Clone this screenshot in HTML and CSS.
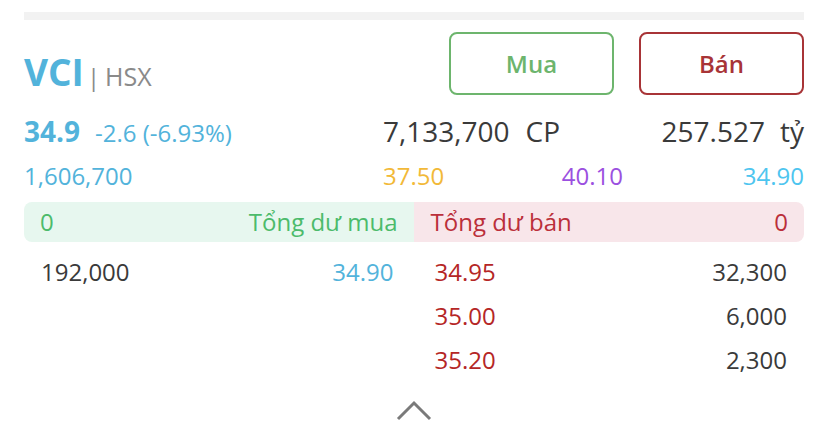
FILE: index.html
```html
<!DOCTYPE html>
<html lang="vi">
<head>
<meta charset="utf-8">
<link rel="stylesheet" href="styles.css">
</head>
<body>
<div class="page">
  <div class="topbar"></div>
  <div class="header">
    <div class="title"><span class="sym">VCI</span><span class="pipe">|</span><span class="exch">HSX</span></div>
    <div class="actions">
      <button class="btn buy">Mua</button>
      <button class="btn sell">Bán</button>
    </div>
  </div>
  <div class="row2">
    <div class="cell price"><span class="last">34.9</span><span class="chg">-2.6 (-6.93%)</span></div>
    <div class="cell vol"><span>7,133,700</span><span class="unit">CP</span></div>
    <div class="cell val"><span>257.527</span><span class="unit2">tỷ</span></div>
  </div>
  <div class="row3">
    <div class="c-blue">1,606,700</div>
    <div class="mid"><span class="c-yellow">37.50</span><span class="c-purple">40.10</span></div>
    <div class="c-cyan right">34.90</div>
  </div>
  <div class="summary">
    <div class="sum buy-sum"><span>0</span><span>Tổng dư mua</span></div>
    <div class="sum sell-sum"><span>Tổng dư bán</span><span>0</span></div>
  </div>
  <div class="book">
    <div class="side bids">
      <div class="orow"><span class="qty">192,000</span><span class="bidp">34.90</span></div>
    </div>
    <div class="side asks">
      <div class="orow"><span class="askp">34.95</span><span class="qty">32,300</span></div>
      <div class="orow"><span class="askp">35.00</span><span class="qty">6,000</span></div>
      <div class="orow"><span class="askp">35.20</span><span class="qty">2,300</span></div>
    </div>
  </div>
  <div class="more">
    <svg width="36" height="22" viewBox="0 0 36 22"><polyline points="2,19 18,3 34,19" fill="none" stroke="#7a7a7a" stroke-width="3"/></svg>
  </div>
</div>
</body>
</html>
```
FILE: styles.css
```css
* { box-sizing: border-box; }
html, body { margin: 0; padding: 0; background: #fff; }
body { font-family: "Open Sans", "Noto Sans", sans-serif; color: #3a3a3a; width: 828px; height: 422px; overflow: hidden; }
.page { padding: 0 24px; }
.topbar { margin-top: 12px; height: 8px; background: #f2f2f2; }
.header { margin-top: 12px; height: 63px; display: flex; justify-content: space-between; align-items: flex-start; }
.title { padding-top: 15px; display: flex; align-items: baseline; line-height: 49px; }
.sym { font-size: 37px; font-weight: 700; color: #52b3db; }
.pipe { font-size: 24px; color: #8a8a8a; margin-left: 3px; margin-right: 5px; }
.exch { font-size: 25px; color: #8a8a8a; }
.actions { display: flex; gap: 25px; }
.btn { width: 165px; height: 63px; border-radius: 8px; background: #fff; font-family: "Open Sans", sans-serif; font-size: 24px; font-weight: 600; padding: 0; }
.buy { border: 2.5px solid #6db56d; color: #6db56d; }
.sell { border: 2.5px solid #a83437; color: #a83437; }
.row2 { margin-top: 16px; height: 40px; display: grid; grid-template-columns: 359px 1fr auto; align-items: baseline; font-size: 28px; }
.cell { display: flex; align-items: baseline; line-height: 40px; }
.last { font-weight: 700; color: #52b3db; }
.chg { font-size: 24px; color: #52b3db; margin-left: 15px; }
.vol, .val { color: #3a3a3a; }
.unit { margin-left: 16px; }
.unit2 { margin-left: 15px; }
.row3 { margin-top: 7px; height: 36px; line-height: 36px; display: grid; grid-template-columns: 359px 240px 1fr; font-size: 24px; }
.mid { display: flex; justify-content: space-between; }
.right { text-align: right; }
.c-blue { color: #52b3db; }
.c-yellow { color: #f2b938; }
.c-purple { color: #9b50e0; }
.c-cyan { color: #4ec5ef; }
.summary { margin-top: 8px; height: 40px; display: flex; border-radius: 8px; overflow: hidden; font-size: 24px; line-height: 40px; }
.sum { flex: 1; display: flex; justify-content: space-between; padding: 0 16px; }
.buy-sum { background: #e7f7ef; color: #4cbb6b; }
.sell-sum { background: #f8e6ea; color: #bb2f3a; padding-left: 17px; }
.book { margin-top: 8px; display: flex; font-size: 24px; }
.side { flex: 1; }
.bids { padding: 0 20px 0 17px; }
.asks { padding: 0 17px 0 21px; }
.orow { height: 44px; line-height: 44px; display: flex; justify-content: space-between; }
.qty { color: #3a3a3a; }
.bidp { color: #52b3db; }
.askp { color: #b52626; }
.more { display: flex; justify-content: center; margin-top: 18px; }
.more svg { display: block; }
```
